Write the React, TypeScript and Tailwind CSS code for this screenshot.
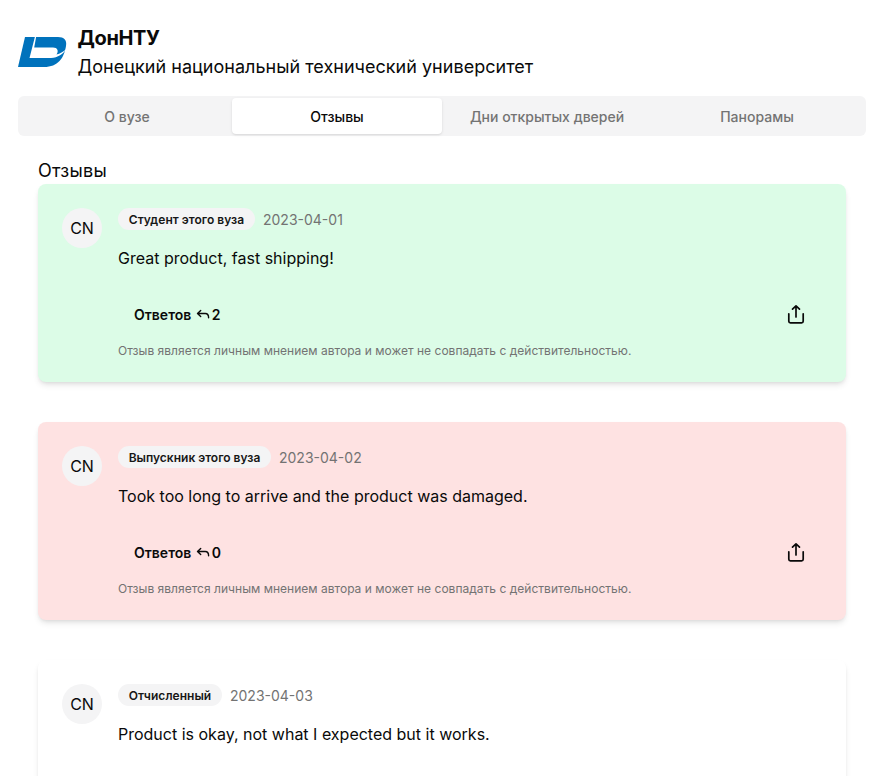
import React from "react";

type Review = { role: string; date: string; text: string; replies: number; tone: string; badge: string };

const reviews: Review[] = [
  { role: "Студент этого вуза", date: "2023-04-01", text: "Great product, fast shipping!", replies: 2, tone: "bg-[#dcfce7]", badge: "w-[137px] tracking-[0.03px]" },
  { role: "Выпускник этого вуза", date: "2023-04-02", text: "Took too long to arrive and the product was damaged.", replies: 0, tone: "bg-[#fee2e2]", badge: "w-[153px]" },
  { role: "Отчисленный", date: "2023-04-03", text: "Product is okay, not what I expected but it works.", replies: 0, tone: "bg-white", badge: "w-[104px] tracking-[0.03px]" },
];

const tabs = ["О вузе", "Отзывы", "Дни открытых дверей", "Панорамы"];

function Logo() {
  return (
    <svg width="50" height="34" viewBox="0 0 50 34" fill="none" className="shrink-0">
      <path d="M7 2H40C46 2 49 5 48 11C46 23 40 32 26 32H0Z" fill="#0072bc" />
      <path d="M17 1.5L11.5 23H33C40 22.7 45 19 48.5 14C45 17 42 18.8 38.5 19.5C41 16 39.5 12.5 35 12.5H16.2L18.2 1.5Z" fill="#fff" />
    </svg>
  );
}

function ReplyIcon() {
  return (
    <svg width="16" height="16" viewBox="0 0 16 16" fill="none" stroke="currentColor" strokeWidth="1.4" strokeLinecap="round" strokeLinejoin="round" className="mr-px">
      <path d="M5.7 3.5L2.5 6.5L5.7 9.5M2.7 6.5H10.3C12.4 6.5 13.6 7.7 13.6 10.8" />
    </svg>
  );
}

function ShareIcon() {
  return (
    <svg width="24" height="24" viewBox="0 0 24 24" fill="none" stroke="currentColor" strokeWidth="1.7" strokeLinecap="round" strokeLinejoin="round">
      <path d="M12 14V2.8M8.5 6.2L12 2.8L15.5 6.2M4.8 10.8V18.2C4.8 19.3 5.4 19.8 6.4 19.8H17.6C18.6 19.8 19.2 19.3 19.2 18.2V10.8" />
    </svg>
  );
}

function ReviewCard({ review }: { review: Review }) {
  return (
    <article className={`flex h-[198px] shrink-0 gap-4 rounded-lg p-6 shadow-md ${review.tone}`}>
      <div className="flex size-10 shrink-0 items-center justify-center rounded-full bg-[#f4f4f5]">CN</div>
      <div className="flex-1">
        <div className="flex h-[22px] items-center gap-2">
          <span className={`flex h-[22px] items-center justify-center rounded-full bg-[#f4f4f5] pt-0.5 text-xs font-semibold whitespace-nowrap text-[#171717] ${review.badge}`}>{review.role}</span>
          <span className="pt-0.5 text-sm text-[#737373]">{review.date}</span>
        </div>
        <p className="mt-4">{review.text}</p>
        <div className="mt-[25px] flex h-10 items-center justify-between pr-[14px] pl-4">
          <button className="flex items-center text-sm font-semibold">Ответов&nbsp;<ReplyIcon />{review.replies}</button>
          <ShareIcon />
        </div>
        <p className="mt-2 text-xs tracking-[0.02px] text-[#737373]">Отзыв является личным мнением автора и может не совпадать с действительностью.</p>
      </div>
    </article>
  );
}

export default function App() {
  return (
    <main className="h-[776px] overflow-hidden bg-white px-[18px] pt-6 font-['Inter',sans-serif] text-[#0a0a0a]">
      <header className="flex h-[56px] items-center gap-[9.5px]">
        <Logo />
        <div className="pt-px">
          <h1 className="text-xl leading-7 font-bold tracking-[-0.35px]">ДонНТУ</h1>
          <p className="text-lg leading-[29px] tracking-[0.02px]">Донецкий национальный технический университет</p>
        </div>
      </header>
      <nav className="mt-4 mr-1 flex h-10 rounded-md bg-[#f4f4f5] px-1 py-0.5 text-sm font-medium text-[#737373]">
        {tabs.map((tab, i) => (
          <button key={tab} className={`flex flex-1 items-center justify-center rounded-sm pt-0.5 ${i === 1 ? "bg-white text-[#0a0a0a] shadow-sm" : ""}`}>{tab}</button>
        ))}
      </nav>
      <section className="mt-[21px] mr-6 ml-5">
        <h2 className="text-lg leading-[27px] tracking-[0.25px]">Отзывы</h2>
        <div className="flex flex-col gap-10">
          {reviews.map((r) => <ReviewCard key={r.date} review={r} />)}
        </div>
      </section>
    </main>
  );
}
